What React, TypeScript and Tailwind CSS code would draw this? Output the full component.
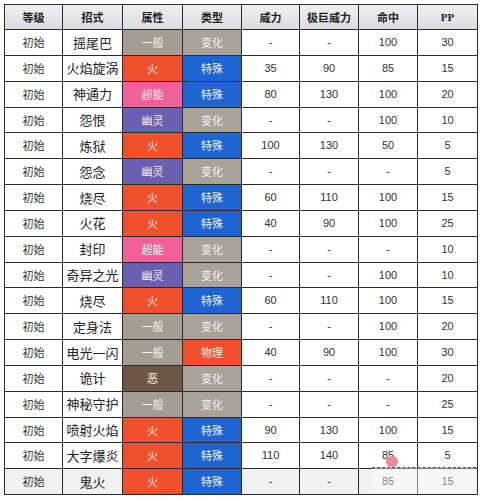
const TYPE_COLORS: Record<string, string> = {
  一般: "bg-[#a49d92]",
  火: "bg-[#f1502c]",
  超能: "bg-[#f0619b]",
  幽灵: "bg-[#6a5fb2]",
  恶: "bg-[#6c5747]",
};

const CAT_COLORS: Record<string, string> = {
  变化: "bg-[#a8a298]",
  特殊: "bg-[#1f65d1]",
  物理: "bg-[#f1502c]",
};

type Move = [string, string, string, string, string, string, string];

const moves: Move[] = [
  ["摇尾巴", "一般", "变化", "-", "-", "100", "30"],
  ["火焰旋涡", "火", "特殊", "35", "90", "85", "15"],
  ["神通力", "超能", "特殊", "80", "130", "100", "20"],
  ["怨恨", "幽灵", "变化", "-", "-", "100", "10"],
  ["炼狱", "火", "特殊", "100", "130", "50", "5"],
  ["怨念", "幽灵", "变化", "-", "-", "-", "5"],
  ["烧尽", "火", "特殊", "60", "110", "100", "15"],
  ["火花", "火", "特殊", "40", "90", "100", "25"],
  ["封印", "超能", "变化", "-", "-", "-", "10"],
  ["奇异之光", "幽灵", "变化", "-", "-", "100", "10"],
  ["烧尽", "火", "特殊", "60", "110", "100", "15"],
  ["定身法", "一般", "变化", "-", "-", "100", "20"],
  ["电光一闪", "一般", "物理", "40", "90", "100", "30"],
  ["诡计", "恶", "变化", "-", "-", "-", "20"],
  ["神秘守护", "一般", "变化", "-", "-", "-", "25"],
  ["喷射火焰", "火", "特殊", "90", "130", "100", "15"],
  ["大字爆炎", "火", "特殊", "110", "140", "85", "5"],
  ["鬼火", "火", "特殊", "-", "-", "85", "15"],
];

const headers = ["等级", "招式", "属性", "类型", "威力", "极巨威力", "命中", "PP"];

const cell = "flex items-center justify-center border-r border-b border-[#2a2a2a]";

export default function App() {
  return (
    <div className="relative h-[500px] w-[483px] bg-white pl-[4px] pt-[4px] font-['Noto_Sans_CJK_SC',sans-serif]">
      <div className="grid h-[491px] w-[474px] grid-cols-[58px_60px_60px_59px_58px_59px_59px_60px] grid-rows-[25px_repeat(18,minmax(0,1fr))] border-l border-t border-[#2a2a2a]">
        {headers.map((h) => (
          <div
            key={h}
            className={`${cell} bg-gradient-to-b from-[#f0f0f3] to-[#dcdce2] text-[11px] font-bold text-[#222] ${
              h === "PP" ? "font-['Liberation_Serif',serif] text-[10px]" : ""
            }`}
          >
            {h}
          </div>
        ))}
        {moves.map((m, i) => {
          const last = i === moves.length - 1;
          const bg = last ? "bg-[#f1f1f1]" : "bg-white";
          return [
            <div key={`${i}-a`} className={`${cell} ${bg} text-[11px] text-[#333]`}>
              初始
            </div>,
            <div key={`${i}-b`} className={`${cell} ${bg} text-[13px] text-[#222]`}>
              {m[0]}
            </div>,
            <div key={`${i}-c`} className={`${cell} ${TYPE_COLORS[m[1]]} text-[11px] text-[#fbeee8]`}>
              {m[1]}
            </div>,
            <div key={`${i}-d`} className={`${cell} ${CAT_COLORS[m[2]]} text-[11px] text-[#f4f4f4]`}>
              {m[2]}
            </div>,
            ...m.slice(3).map((v, j) => (
              <div key={`${i}-v${j}`} className={`${cell} ${bg} font-['Liberation_Sans',sans-serif] text-[11px] text-[#333]`}>
                {v}
              </div>
            )),
          ];
        })}
      </div>
      {/* watermark overlay */}
      <div className="absolute left-[372px] top-[467px] h-[27px] w-[104px] border-t border-dashed border-[#555] bg-white/40" />
      <div className="absolute left-[386px] top-[456px] h-[11px] w-[12px] rounded-full bg-[#ec8a9a]" />
    </div>
  );
}
